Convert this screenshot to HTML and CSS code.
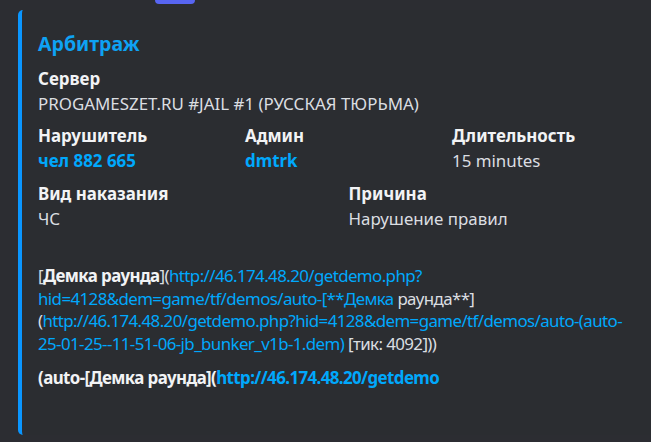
FILE: index.html
```html
<!DOCTYPE html>
<html lang="ru">
<head>
    <meta charset="UTF-8">
    <title>Арбитраж</title>
    <link rel="stylesheet" href="styles.css">
</head>
<body>
    <!-- кнопка над эмбедом (видна только нижняя кромка) -->
    <div class="button-edge"></div>

    <!-- эмбед -->
    <article class="embed">
        <div class="embed-grid">
            <div class="embed-title">Арбитраж</div>

            <div class="embed-fields">
                <div class="field field-full">
                    <div class="field-name">Сервер</div>
                    <div class="field-value">PROGAMESZET.RU #JAIL #1 (РУССКАЯ ТЮРЬМА)</div>
                </div>

                <div class="field field-third">
                    <div class="field-name">Нарушитель</div>
                    <div class="field-value"><a class="mention" href="#">чел 882 665</a></div>
                </div>
                <div class="field field-third">
                    <div class="field-name">Админ</div>
                    <div class="field-value"><a class="mention" href="#">dmtrk</a></div>
                </div>
                <div class="field field-third">
                    <div class="field-name">Длительность</div>
                    <div class="field-value">15 minutes</div>
                </div>

                <div class="field field-half">
                    <div class="field-name">Вид наказания</div>
                    <div class="field-value">ЧС</div>
                </div>
                <div class="field field-half">
                    <div class="field-name">Причина</div>
                    <div class="field-value">Нарушение правил</div>
                </div>

                <!-- демка: ссылки -->
                <div class="field field-full field-demo">
                    <div class="field-name">&nbsp;</div>
                    <div class="field-value">[<strong>Демка раунда</strong>](<a href="#">http://46.174.48.20/getdemo.php?<br>hid=4128&amp;dem=game/tf/demos/auto-[**Демка</a> раунда**]<br>(<a href="#">http://46.174.48.20/getdemo.php?hid=4128&amp;dem=game/tf/demos/auto-(auto-<br>25-01-25--11-51-06-jb_bunker_v1b-1.dem)</a> [тик: 4092]))</div>
                </div>

                <div class="field field-full field-demo">
                    <div class="field-name">(auto-[Демка раунда](<a href="#">http://46.174.48.20/getdemo</a></div>
                    <div class="field-value">&nbsp;</div>
                </div>
            </div>
        </div>
    </article>
</body>
</html>
```

FILE: styles.css
```css
* { margin: 0; padding: 0; box-sizing: border-box; }
body { background: #2c2d32; font-family: 'Noto Sans', 'Open Sans', sans-serif; overflow: hidden; width: 651px; height: 442px; }
a { color: #00a8fc; text-decoration: none; }

/* кромка кнопки */
.button-edge { width: 40px; height: 4px; margin-left: 155px; background: #5865f2; border-radius: 0 0 5px 5px; }

/* эмбед */
.embed { margin: 6px 0 0 18px; width: 653px; background: #2b2d31; border-left: 4px solid #0a96ff; border-radius: 5px; padding: 10px 20px 20px 16px; }
.embed-grid { display: flex; flex-direction: column; }
.embed-title { margin-top: 10px; font-size: 19.5px; line-height: 27.5px; font-weight: 700; color: #0ea2f4; }

/* поля */
.embed-fields { margin-top: 10px; display: grid; grid-template-columns: repeat(12, 1fr); gap: 10px 8px; }
.field { min-width: 0; font-size: 16.9px; line-height: 22.5px; }
.field-full { grid-column: span 12; }
.field-third { grid-column: span 4; }
.field-half { grid-column: span 6; }
.field-name { font-weight: 700; color: #f2f3f5; margin-bottom: 2.5px; }
.field-value { color: #dbdee1; white-space: nowrap; }
.field-value strong { font-weight: 700; color: #f2f3f5; }
.field-demo { letter-spacing: -0.6px; }
.field-demo + .field-demo { margin-top: 2px; }
.mention { font-weight: 700; }
```
